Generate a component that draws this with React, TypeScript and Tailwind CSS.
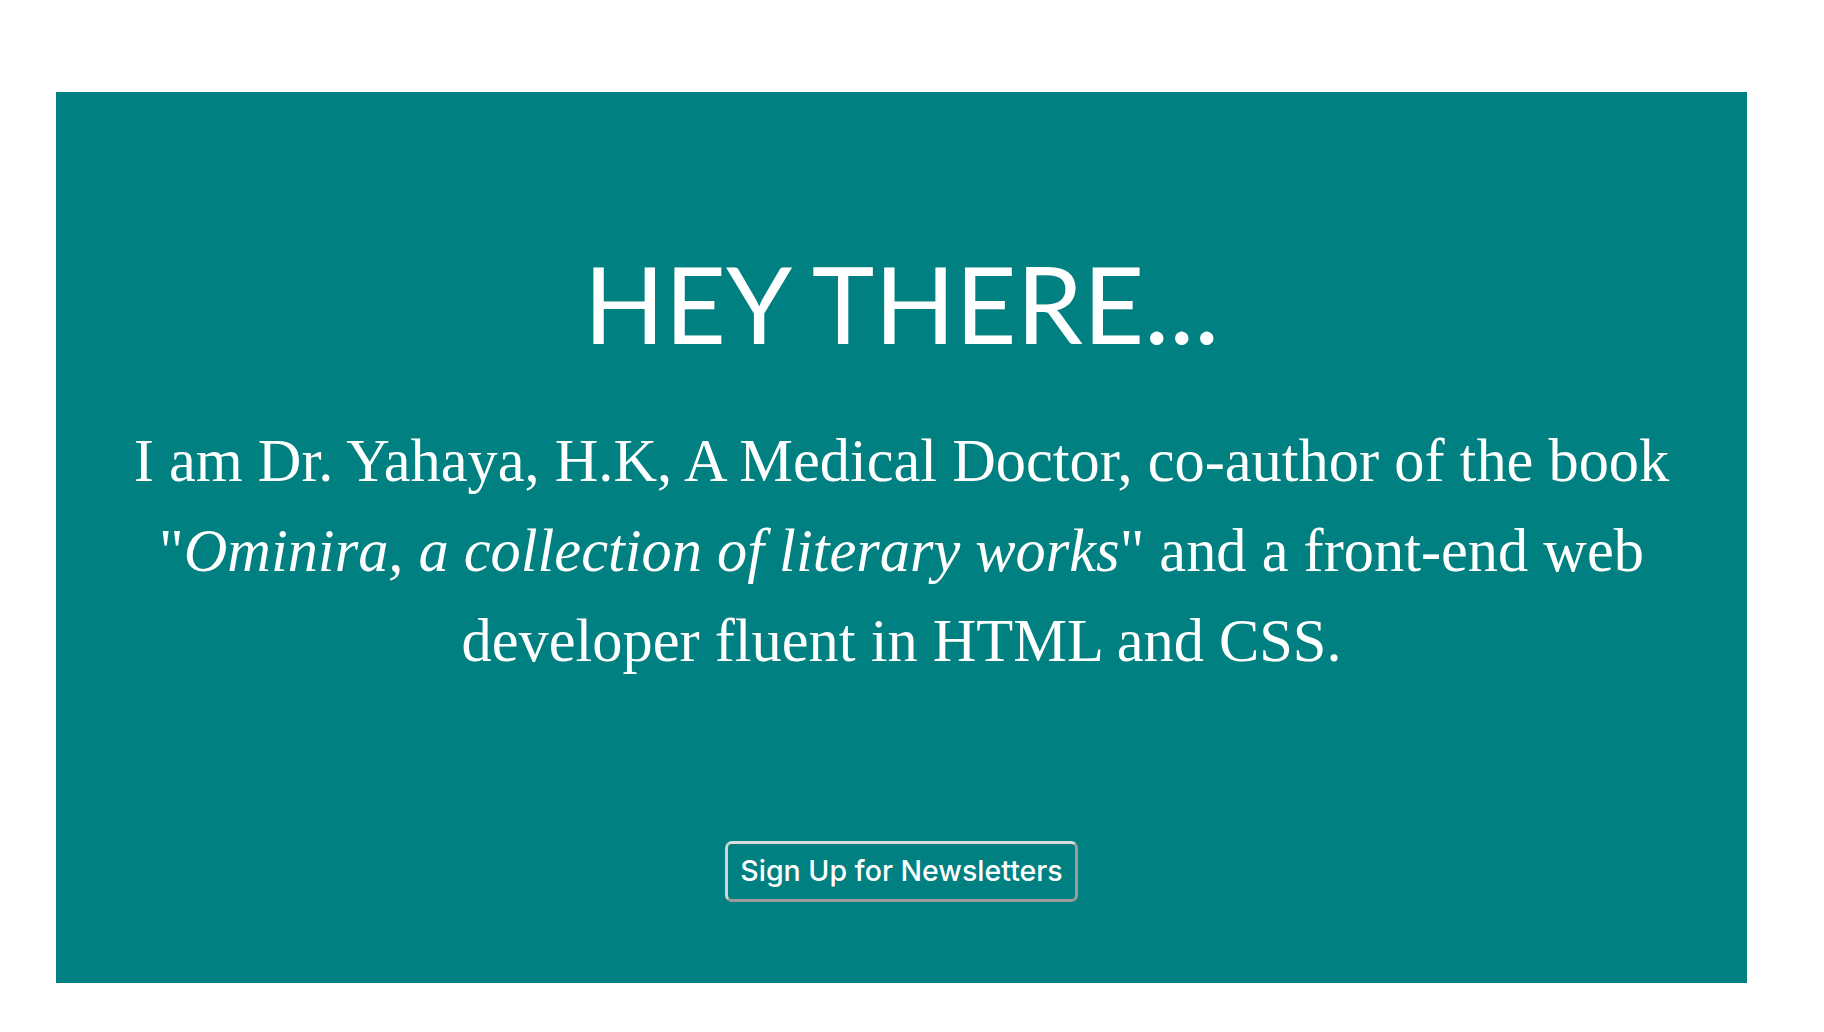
import React from "react";

export default function App() {
  return (
    <div className="min-h-screen bg-white pt-[92px] pb-[49px]">
      <section className="ml-[56px] w-[1691px] bg-[#008080] pt-[147px] pb-[81px] text-center text-white">
        <h1 className="font-['Lato',sans-serif] text-[106px] font-normal leading-[128px]">
          HEY THERE...
        </h1>
        <p className="mx-auto mt-[49px] max-w-[1600px] font-['Liberation_Serif',serif] text-[60.4px] leading-[90px]">
          I am Dr. Yahaya, H.K, A Medical Doctor, co-author of the book "
          <em>Ominira, a collection of literary works</em>" and a front-end web
          developer fluent in HTML and CSS.
        </p>
        <div className="mt-[155px] flex justify-center">
          <button className="flex h-[61px] w-[353px] items-center justify-center rounded-[7px] border-[3px] border-t-[#dcdcdc] border-l-[#d4d4d4] border-r-[#9c9c9c] border-b-[#9a9a9a] bg-[#008080] font-['Inter',sans-serif] text-[28.5px] font-medium text-white">
            Sign Up for Newsletters
          </button>
        </div>
      </section>
    </div>
  );
}
